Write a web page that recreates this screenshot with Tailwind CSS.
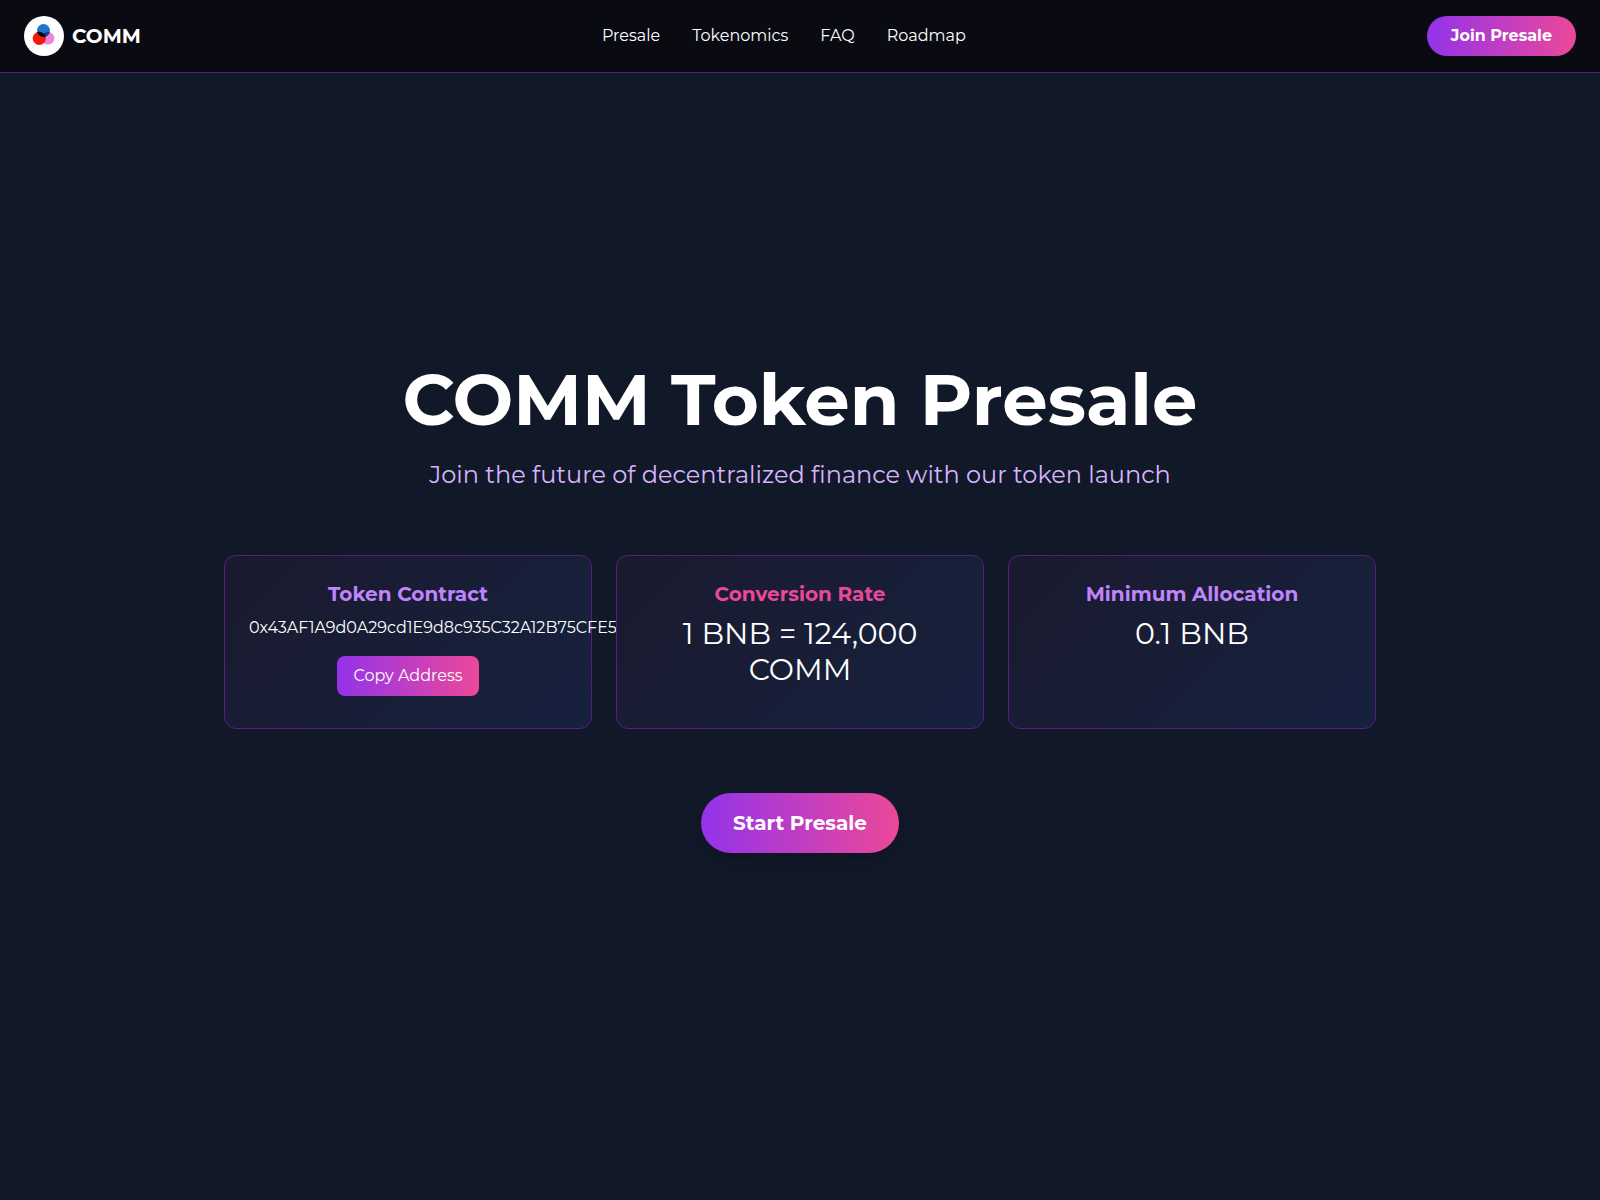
<!DOCTYPE html>
<html lang="en">
<head>
  <meta charset="UTF-8" />
  <meta name="viewport" content="width=device-width, initial-scale=1.0">
  <title>COMM Token Presale</title>
  <script src="https://cdn.jsdelivr.net/npm/@tailwindcss/browser@4"></script>
</head>
<body class="bg-[#111827] text-white font-['Montserrat','Open_Sans',sans-serif]">

  <!-- Header -->
  <header class="fixed top-0 inset-x-0 z-10 flex items-center justify-between px-6 py-4 bg-[#0a0a12] border-b border-[#581c87]">
    <a href="#" class="flex items-center gap-2">
      <svg class="size-10" viewBox="0 0 40 40" aria-hidden="true">
        <clipPath id="blue"><circle cx="19.5" cy="14.5" r="6.5" /></clipPath>
        <circle cx="20" cy="20" r="20" fill="#fff" />
        <circle cx="24" cy="22.3" r="6.3" fill="#f084d4" />
        <circle cx="15.3" cy="22.3" r="6.6" fill="#f51a05" />
        <circle cx="19.5" cy="14.5" r="6.5" fill="#1f74cc" />
        <circle cx="24" cy="22.3" r="6.3" fill="#1238a0" clip-path="url(#blue)" />
        <circle cx="15.3" cy="22.3" r="6.6" fill="#080812" clip-path="url(#blue)" />
      </svg>
      <span class="text-xl font-bold">COMM</span>
    </a>
    <nav class="flex gap-8">
      <a href="#presale">Presale</a>
      <a href="#tokenomics">Tokenomics</a>
      <a href="#faq">FAQ</a>
      <a href="#roadmap">Roadmap</a>
    </nav>
    <button class="px-6 py-2 rounded-full font-bold bg-linear-to-r/srgb from-[#9333ea] to-[#ec4899]">Join Presale</button>
  </header>

  <!-- Hero -->
  <main id="presale" class="min-h-screen flex items-center justify-center pt-4">
    <div class="w-full max-w-6xl text-center">
      <h1 class="text-7xl font-bold mb-6">COMM Token Presale</h1>
      <p class="text-2xl text-[#d8b4fe] mb-16">Join the future of decentralized finance with our token launch</p>

      <div class="grid grid-cols-3 gap-6 mb-16">
        <div class="p-6 pb-8 rounded-xl border border-[#581c87] bg-[linear-gradient(135deg,#1a1a2e,#16213e)]">
          <h2 class="text-xl font-bold text-[#c084fc] mb-2">Token Contract</h2>
          <p class="mb-4 text-left whitespace-nowrap">0x43AF1A9d0A29cd1E9d8c935C32A12B75CFE5</p>
          <button class="px-4 py-2 rounded-lg bg-linear-to-r/srgb from-[#9333ea] to-[#ec4899]">Copy Address</button>
        </div>
        <div class="relative p-6 rounded-xl border border-[#581c87] bg-[linear-gradient(135deg,#1a1a2e,#16213e)]">
          <h2 class="text-xl font-bold text-[#ec4899] mb-2">Conversion Rate</h2>
          <p class="text-3xl">1 BNB = 124,000 COMM</p>
        </div>
        <div class="p-6 rounded-xl border border-[#581c87] bg-[linear-gradient(135deg,#1a1a2e,#16213e)]">
          <h2 class="text-xl font-bold text-[#c084fc] mb-2">Minimum Allocation</h2>
          <p class="text-3xl">0.1 BNB</p>
        </div>
      </div>

      <button class="px-8 py-4 rounded-full text-xl font-bold shadow-lg bg-linear-to-r/srgb from-[#9333ea] to-[#ec4899]">Start Presale</button>
    </div>
  </main>

</body>
</html>
